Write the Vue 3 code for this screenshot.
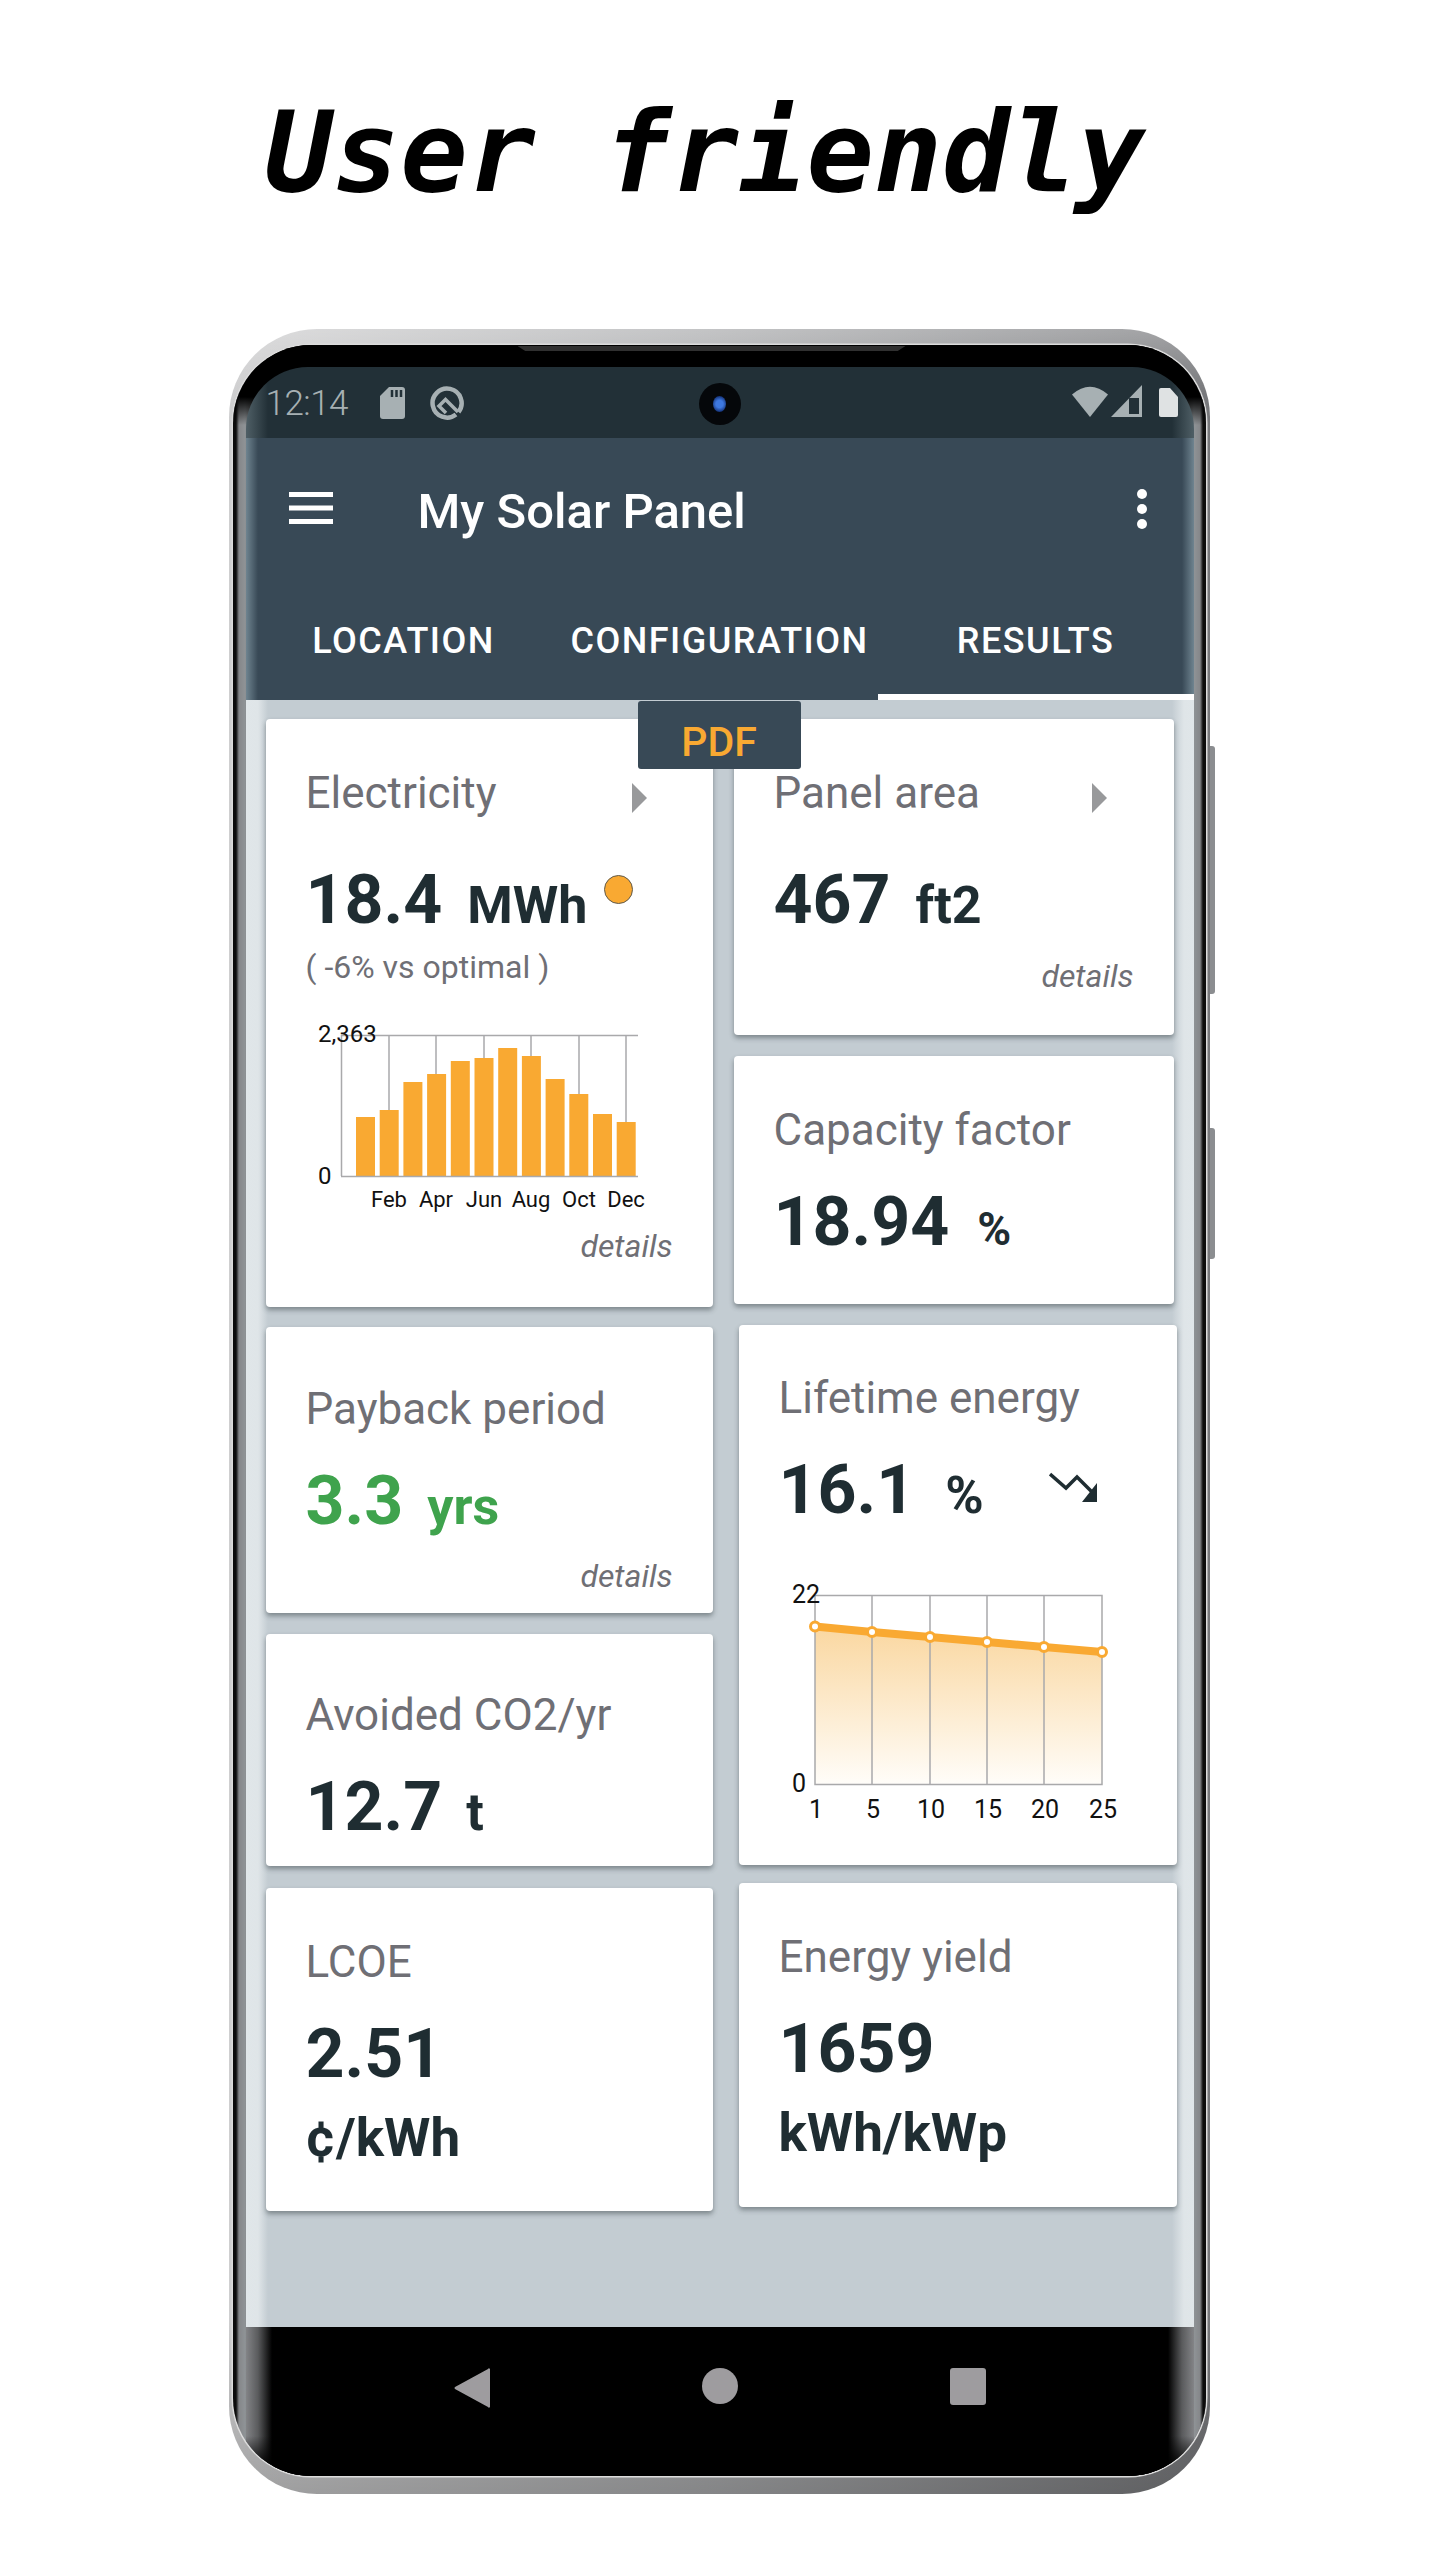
<script setup>
const months = ['Feb', 'Apr', 'Jun', 'Aug', 'Oct', 'Dec']
const monthX = [83, 130, 178, 225, 273, 320]
const barTops = [1118, 1111, 1083, 1075, 1062, 1059, 1049, 1057, 1080, 1095, 1115, 1123]
const bars = barTops.map((t, i) => ({ x: 50 + i * 23.7, y: t - 1020, h: 1177 - t }))
const years = ['1', '5', '10', '15', '20', '25']
const yearX = [34, 91, 149, 206, 263, 321]
const yearY = [38.5, 44, 49, 54, 59, 64]
const linePts = yearX.map((x, i) => `${x},${yearY[i]}`).join(' ')
const areaPts = `34,196 ${linePts} 321,196`
</script>

<template>
  <div class="page">
    <h1 class="headline">User friendly</h1>
    <div class="phone">
      <span class="side-btn btn-a"></span>
      <span class="side-btn btn-b"></span>
      <div class="bezel">
        <span class="speaker"></span>
        <div class="screen">
          <div class="statusbar">
            <span class="clock">12:14</span>
            <svg class="st-ic" width="25" height="32" viewBox="0 0 25 32"><path d="M9 0h13a3 3 0 0 1 3 3v26a3 3 0 0 1-3 3H3a3 3 0 0 1-3-3V9z" fill="#a7b0b3"/><path d="M12 3v7M16.500 3v7M21 3v7" stroke="#223037" stroke-width="2.500"/></svg>
            <svg class="st-ic st-ring" width="35" height="35" viewBox="0 0 35 35"><path d="M27 28.500A14.500 14.500 0 1 1 29.500 26" fill="none" stroke="#a7b0b3" stroke-width="4.500"/><path d="M17 27L10 20l6.500-6.500L29 26" fill="none" stroke="#a7b0b3" stroke-width="3.500"/></svg>
            <span class="st-spacer"></span>
            <svg class="st-wifi" width="36" height="32" viewBox="0 0 36 32"><path d="M0 9.500Q18-6 36 9.500L18 32z" fill="#a7b0b3"/></svg>
            <svg class="st-signal" width="31" height="32" viewBox="0 0 31 32"><path d="M31 0v32H0zM28 13h-10v16h10z" fill="#a7b0b3" fill-rule="evenodd"/></svg>
            <svg class="st-batt" width="19" height="29" viewBox="0 0 19 29"><path d="M2 0h9l8 9v18a2 2 0 0 1-2 2H2a2 2 0 0 1-2-2V2a2 2 0 0 1 2-2z" fill="#dfe2e3"/></svg>
            <span class="camera"><span class="lens"></span></span>
          </div>

          <div class="appbar">
            <div class="toolbar">
              <svg class="menu" width="44" height="32" viewBox="0 0 44 32"><path d="M0 0h44v5H0zM0 13.500h44v5H0zM0 27h44v5H0z" fill="#fff"/></svg>
              <span class="apptitle">My Solar Panel</span>
              <svg class="kebab" width="12" height="40" viewBox="0 0 12 40"><ellipse cx="6" cy="5" rx="5" ry="5" fill="#fff"/><ellipse cx="6" cy="20" rx="5" ry="5" fill="#fff"/><ellipse cx="6" cy="35" rx="5" ry="5" fill="#fff"/></svg>
            </div>
            <div class="tabs">
              <div class="tab">LOCATION</div>
              <div class="tab">CONFIGURATION</div>
              <div class="tab tab-on">RESULTS</div>
            </div>
          </div>

          <div class="content">
            <div class="pdf">PDF</div>
            <div class="col col-left">
              <section class="card c-electric">
                <div class="title-row">
                  <span class="card-title">Electricity</span>
                  <svg class="arrow arrow-l" width="15" height="30" viewBox="0 0 15 30"><path d="M0 0l15 15L0 30z" fill="#98999b"/></svg>
                </div>
                <div class="value value-hero">
                  <span class="num">18.4</span><span class="unit">MWh</span>
                  <span class="state-dot"></span>
                </div>
                <div class="subtitle">( -6% vs optimal )</div>
                <svg class="chart-bars" width="350" height="196" viewBox="0 0 350 196">
                  <path d="M35 16.500H332M35.500 16V157" stroke="#a9a9ab" stroke-width="1.500" fill="none"/>
                  <path v-for="x in monthX" :key="x" :d="`M${x} 16V157`" stroke="#a9a9ab" stroke-width="1.500"/>
                  <rect v-for="(b, i) in bars" :key="i" :x="b.x" :y="b.y" width="19" :height="b.h" fill="#f9a932"/>
                  <path d="M35 157.500H332" stroke="#a9a9ab" stroke-width="1.500"/>
                  <text x="12" y="23" class="ax">2,363</text>
                  <text x="12" y="165" class="ax">0</text>
                  <text v-for="(m, i) in months" :key="m" :x="monthX[i]" y="188" class="ax ax-m" text-anchor="middle">{{ m }}</text>
                </svg>
                <div class="details d-electric">details</div>
              </section>

              <section class="card c-payback">
                <span class="card-title">Payback period</span>
                <div class="value value-green"><span class="num">3.3</span><span class="unit unit-tight">yrs</span></div>
                <div class="details d-payback">details</div>
              </section>

              <section class="card c-avoided">
                <span class="card-title">Avoided CO2/yr</span>
                <div class="value"><span class="num">12.7</span><span class="unit unit-tight">t</span></div>
              </section>

              <section class="card c-lcoe">
                <span class="card-title">LCOE</span>
                <div class="value"><span class="num">2.51</span></div>
                <div class="unit-line">¢/kWh</div>
              </section>
            </div>

            <div class="col col-right">
              <section class="card c-panel">
                <div class="title-row">
                  <span class="card-title">Panel area</span>
                  <svg class="arrow arrow-r" width="15" height="30" viewBox="0 0 15 30"><path d="M0 0l15 15L0 30z" fill="#98999b"/></svg>
                </div>
                <div class="value value-hero"><span class="num">467</span><span class="unit">ft2</span></div>
                <div class="details d-panel">details</div>
              </section>

              <section class="card c-capacity">
                <span class="card-title">Capacity factor</span>
                <div class="value"><span class="num">18.94</span><span class="unit unit-pct">%</span></div>
              </section>

              <section class="card card-inset c-lifetime">
                <span class="card-title">Lifetime energy</span>
                <div class="value value-trend">
                  <span class="num">16.1</span><span class="unit unit-pct unit-big">%</span>
                  <svg class="trend" width="50" height="32" viewBox="0 0 50 32">
                    <path d="M1 2l16 14 11-11 15 15" fill="none" stroke="#1f2d32" stroke-width="3.500"/>
                    <path d="M48 11v19H33z" fill="#1f2d32"/>
                  </svg>
                </div>
                <svg class="chart-line" width="360" height="256" viewBox="0 0 360 256">
                  <defs>
                    <linearGradient id="areaFill" x1="0" y1="0" x2="0" y2="1">
                      <stop offset="0" stop-color="#fad7a0"/>
                      <stop offset="1" stop-color="#fffdf9"/>
                    </linearGradient>
                  </defs>
                  <g transform="translate(0 10)">
                    <polygon :points="areaPts" fill="url(#areaFill)"/>
                    <path d="M34 7.500H321V196.500H34z" fill="none" stroke="#a9a9ab" stroke-width="1.500"/>
                    <path v-for="x in yearX.slice(1, 5)" :key="x" :d="`M${x} 7V196`" stroke="#a9a9ab" stroke-width="1.500"/>
                    <polyline :points="linePts" fill="none" stroke="#f9a932" stroke-width="8"/>
                    <circle v-for="(x, i) in yearX" :key="x" :cx="x" :cy="yearY[i]" r="4.500" fill="#fff" stroke="#f9a932" stroke-width="3"/>
                    <text x="11" y="15" class="ax ax-l">22</text>
                    <text x="11" y="204" class="ax ax-l">0</text>
                    <text v-for="(y, i) in years" :key="y" :x="yearX[i] + 1" y="230" class="ax ax-l" text-anchor="middle">{{ y }}</text>
                  </g>
                </svg>
              </section>

              <section class="card card-inset c-yield">
                <span class="card-title">Energy yield</span>
                <div class="value"><span class="num">1659</span></div>
                <div class="unit-line">kWh/kWp</div>
              </section>
            </div>
          </div>

          <div class="navbar">
            <svg width="36" height="40" viewBox="0 0 36 40"><path d="M34 1a1 1 0 0 1 2 1v36a1 1 0 0 1-2 1L1 21a1.500 1.500 0 0 1 0-2z" fill="#9e9c9f"/></svg>
            <svg width="36" height="36" viewBox="0 0 36 36"><circle cx="18" cy="18" r="18" fill="#9e9c9f"/></svg>
            <svg width="36" height="37" viewBox="0 0 36 37"><rect width="36" height="37" rx="3" fill="#9e9c9f"/></svg>
          </div>
        </div>
      </div>
    </div>
  </div>
</template>

<style scoped>
.page {
  width: 1440px;
  height: 2563px;
  background: #fff;
  display: flex;
  flex-direction: column;
  align-items: center;
  overflow: hidden;
  font-family: Roboto, "Liberation Sans", sans-serif;
}
.headline {
  margin: 88px 30px 0 0;
  height: 241px;
  font: italic 700 112.500px/130px "DejaVu Sans Mono", monospace;
  color: #000;
  white-space: pre;
}
.phone {
  position: relative;
  width: 981px;
  height: 2165px;
  margin-left: -2px;
  box-sizing: border-box;
  padding: 16px 4px 18px;
  border-radius: 88px;
  background:
    linear-gradient(180deg, rgba(255, 255, 255, .3) 0, rgba(255, 255, 255, 0) 3%, rgba(0, 0, 0, 0) 92%, rgba(0, 0, 0, .22) 100%),
    linear-gradient(90deg, #cfcfd0 0, #a9aaac 50%, #77787b 100%);
}
.side-btn {
  position: absolute;
  left: 100%;
  width: 5px;
  background: #8b8d90;
  border-radius: 0 3px 3px 0;
}
.btn-a { top: 417px; height: 248px; }
.btn-b { top: 799px; height: 131px; }
.bezel {
  position: relative;
  height: 100%;
  box-sizing: border-box;
  padding: 22px 12px 0 13px;
  border-radius: 78px;
  box-shadow: 0 0 0 1.500px #dcdcdc;
  background: linear-gradient(90deg, #0c0c0c 0 3px, #85878a 6px, #8f9396 12px, #000 40px, #000 calc(100% - 40px), #8f9396 calc(100% - 12px), #85878a calc(100% - 6px), #0c0c0c calc(100% - 3px));
  overflow: hidden;
}
.bezel::before {
  content: "";
  position: absolute;
  top: 0;
  left: 0;
  right: 0;
  height: 80px;
  background: linear-gradient(180deg, #000 0, #000 65%, rgba(0, 0, 0, 0) 100%);
}
.speaker {
  position: absolute;
  z-index: 2;
  top: 1px;
  left: 285px;
  width: 388px;
  height: 5px;
  background: #303030;
  clip-path: polygon(0 0, 100% 0, 98% 100%, 2% 100%);
}
.screen {
  position: relative;
  z-index: 1;
  height: 100%;
  display: flex;
  flex-direction: column;
  border-radius: 62px 62px 0 0;
  overflow: hidden;
}
.statusbar {
  position: relative;
  height: 71px;
  flex: none;
  box-sizing: border-box;
  padding: 18px 16px 0 20px;
  display: flex;
  align-items: flex-start;
  background: linear-gradient(90deg, #4f5f66 0, #223037 22px, #223037 calc(100% - 22px), #4f5f66 100%);
  color: #a7b0b3;
}
.clock {
  font-size: 35px;
  line-height: 38px;
  font-weight: 300;
  width: 114px;
  letter-spacing: -.5px;
}
.st-ic { margin-top: 2px; flex: none; }
.st-ring { margin: 1px 0 0 24px; }
.st-spacer { flex: 1; }
.st-wifi { flex: none; }
.st-signal { margin-left: 3px; flex: none; }
.st-batt { margin: 3px 0 0 17px; flex: none; }
.camera {
  position: absolute;
  left: 453px;
  top: 16px;
  width: 42px;
  height: 42px;
  border-radius: 50%;
  background: #05070a;
  display: flex;
  align-items: center;
  justify-content: center;
}
.lens {
  width: 13px;
  height: 16px;
  border-radius: 50%;
  background: radial-gradient(circle, #3e78e0 0 35%, #0f2a6c 80%);
}
.appbar {
  height: 262px;
  flex: none;
  background: linear-gradient(90deg, #6f8490 0, #384956 12px, #384956 calc(100% - 12px), #6f8490 100%);
  color: #fff;
  display: flex;
  flex-direction: column;
}
.toolbar {
  height: 152px;
  flex: none;
  box-sizing: border-box;
  padding: 54px 46px 0 43px;
  display: flex;
  align-items: flex-start;
}
.menu { flex: none; }
.apptitle {
  margin: -8px 0 0 85px;
  flex: 1;
  font-size: 49px;
  line-height: 56px;
  font-weight: 500;
}
.kebab { margin-top: -3px; }
.tabs {
  flex: 1;
  display: grid;
  grid-template-columns: repeat(3, 1fr);
}
.tab {
  text-align: center;
  font-size: 36px;
  font-weight: 500;
  line-height: 42px;
  padding-top: 30px;
  letter-spacing: 1.500px;
  white-space: nowrap;
}
.tab-on { border-bottom: 6px solid #fff; }
.content {
  position: relative;
  height: 1627px;
  flex: none;
  box-sizing: border-box;
  padding: 19px 18px 0 20px;
  display: flex;
  gap: 21px;
  background: linear-gradient(90deg, #e0e6e9 0, #dfe5e8 12px, #c3ccd2 22px, #c3ccd2 calc(100% - 22px), #dfe5e8 calc(100% - 10px), #e0e6e9 100%);
}
.pdf {
  position: absolute;
  z-index: 3;
  left: 392px;
  top: 1px;
  width: 163px;
  height: 68px;
  box-sizing: border-box;
  padding-top: 19px;
  border-radius: 3px;
  background: #384956;
  color: #f9a932;
  text-align: center;
  font-size: 41px;
  line-height: 44px;
  font-weight: 500;
}
.col {
  display: flex;
  flex-direction: column;
}
.col-left { width: 447px; flex: none; }
.col-right { width: 443px; flex: none; }
.card {
  position: relative;
  box-sizing: border-box;
  background: #fff;
  border-radius: 4px;
  box-shadow: 0 3px 5px rgba(40, 50, 55, .45);
  padding-left: 40px;
  display: flex;
  flex-direction: column;
  align-items: stretch;
}
.card-inset { margin-left: 5px; width: 438px; }
.col-right .card:not(.card-inset) { width: 440px; }
.c-electric { height: 588px; padding-top: 48px; }
.c-payback { height: 286px; margin-top: 20px; padding-top: 56px; }
.c-avoided { height: 232px; margin-top: 21px; padding-top: 55px; }
.c-lcoe { height: 323px; margin-top: 22px; padding-top: 48px; }
.c-panel { height: 316px; padding-top: 48px; }
.c-capacity { height: 248px; margin-top: 21px; padding-top: 48px; }
.c-lifetime { height: 540px; margin-top: 21px; padding-top: 47px; }
.c-yield { height: 324px; margin-top: 18px; padding-top: 48px; }
.title-row {
  display: flex;
  align-items: flex-start;
}
.card-title {
  font-size: 44px;
  line-height: 52px;
  color: #6f6f75;
  white-space: nowrap;
}
.arrow { position: absolute; top: 64px; }
.arrow-l { left: 366px; }
.arrow-r { left: 358px; }
.value {
  margin-top: 26px;
  display: flex;
  align-items: baseline;
  color: #1f2d32;
  height: 80px;
}
.value-hero { margin-top: 41px; }
.value-green { color: #3fa34d; }
.num {
  font-size: 68px;
  line-height: 80px;
  font-weight: 700;
}
.unit {
  margin-left: 25px;
  font-size: 52px;
  line-height: 80px;
  font-weight: 700;
}
.unit-tight { margin-left: 24px; }
.unit-pct { font-size: 46px; margin-left: 28px; }
.unit-big { font-size: 52px; margin-left: 30px; }
.state-dot {
  position: absolute;
  left: 338px;
  top: 156px;
  width: 29px;
  height: 29px;
  box-sizing: border-box;
  border-radius: 50%;
  background: #f9a932;
  border: 1px solid #5f5a4c;
}
.trend {
  position: absolute;
  left: 310px;
  top: 147px;
}
.subtitle {
  margin-top: 7px;
  font-size: 32px;
  line-height: 40px;
  color: #6f6f75;
}
.chart-bars {
  margin: 32px 0 0 0;
  display: block;
}
.chart-line {
  margin: 48px 0 0 2px;
  display: block;
}
.ax {
  font-family: Roboto, "Liberation Sans", sans-serif;
  font-size: 24px;
  fill: #111;
}
.ax-m { font-size: 22px; }
.ax-l { font-size: 25px; }
.unit-line {
  margin-top: 14px;
  font-size: 53px;
  line-height: 60px;
  font-weight: 700;
  color: #1f2d32;
}
.details {
  margin-top: auto;
  text-align: right;
  font-style: italic;
  font-size: 32px;
  line-height: 40px;
  color: #6f6f75;
}
.d-electric { padding: 0 40px 41px 0; }
.d-payback { padding: 0 40px 17px 0; }
.d-panel { padding: 0 40px 39px 0; }
.navbar {
  height: 149px;
  flex: none;
  box-sizing: border-box;
  padding-top: 41px;
  display: flex;
  align-items: flex-start;
  justify-content: center;
  gap: 212px;
  background:
    linear-gradient(0deg, #000 0, #000 8px, rgba(0, 0, 0, 0) 40px),
    linear-gradient(90deg, #838487 0, #5a5b5d 12px, #000 26px, #000 calc(100% - 26px), #5a5b5d calc(100% - 12px), #838487 100%);
}
</style>
